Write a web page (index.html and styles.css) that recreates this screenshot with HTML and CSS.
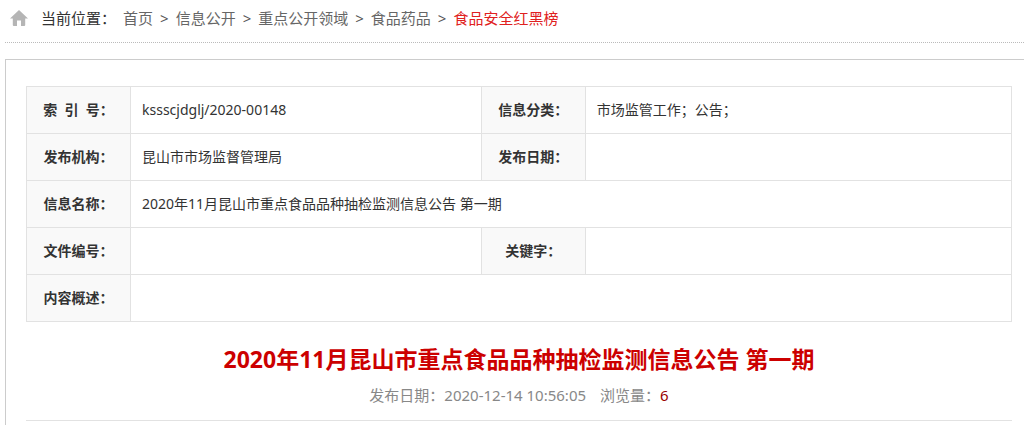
FILE: index.html
```html
<!DOCTYPE html>
<html lang="zh-CN">
<head>
    <meta charset="UTF-8">
    <meta name="viewport" content="width=device-width, initial-scale=1.0">
    <title>2020年11月昆山市重点食品品种抽检监测信息公告 第一期</title>
    <link rel="stylesheet" href="styles.css">
</head>
<body>
    <nav class="position">
        <svg class="home" viewBox="0 0 18 16" aria-hidden="true">
            <path d="M9 0 L18 8.4 H15.2 V15 Q15.2 16 14.2 16 H11 V10.5 H7 V16 H3.8 Q2.8 16 2.8 15 V8.4 H0 Z"/>
        </svg>
        <span class="position-label">当前位置：</span>
        <a href="#">首页</a>
        <span class="sep">&gt;</span>
        <a href="#">信息公开</a>
        <span class="sep">&gt;</span>
        <a href="#">重点公开领域</a>
        <span class="sep">&gt;</span>
        <a href="#">食品药品</a>
        <span class="sep">&gt;</span>
        <a href="#" class="current">食品安全红黑榜</a>
    </nav>

    <main class="panel">
        <table class="info">
            <colgroup>
                <col class="col-label">
                <col class="col-value">
                <col class="col-label">
                <col>
            </colgroup>
            <tr>
                <th scope="row">索&nbsp; 引&nbsp; 号：</th>
                <td>kssscjdglj/2020-00148</td>
                <th scope="row">信息分类：</th>
                <td>市场监管工作；公告；</td>
            </tr>
            <tr>
                <th scope="row">发布机构：</th>
                <td>昆山市市场监督管理局</td>
                <th scope="row">发布日期：</th>
                <td></td>
            </tr>
            <tr>
                <th scope="row">信息名称：</th>
                <td colspan="3">2020年11月昆山市重点食品品种抽检监测信息公告 第一期</td>
            </tr>
            <tr>
                <th scope="row">文件编号：</th>
                <td></td>
                <th scope="row">关键字：</th>
                <td></td>
            </tr>
            <tr>
                <th scope="row">内容概述：</th>
                <td colspan="3"></td>
            </tr>
        </table>

        <h1 class="title">2020年11月昆山市重点食品品种抽检监测信息公告 第一期</h1>
        <div class="meta">
            <span>发布日期：2020-12-14 10:56:05</span>
            <span>浏览量：<b class="count">6</b></span>
        </div>
    </main>
</body>
</html>
```

FILE: styles.css
```css
body {
    display: flex;
    flex-direction: column;
    min-height: 100vh;
    margin: 0;
    padding-left: 5px;
    box-sizing: border-box;
    background: #fff;
    color: #333;
    font-family: "Noto Sans", "Noto Sans CJK SC", sans-serif;
    font-size: 14px;
}
a {
    color: #666;
    text-decoration: none;
}
a:hover {
    text-decoration: underline;
}
.position {
    display: flex;
    align-items: center;
    gap: 7px;
    height: 36px;
    padding: 0 0 6px 5px;
    border-bottom: 1px dotted #bbb;
    font-size: 15px;
    line-height: 20px;
}
.home {
    width: 18px;
    height: 16px;
    margin-right: 6px;
    fill: #b5b5b5;
}
.sep {
    color: #555;
}
.position .current {
    color: #e02020;
}
.panel {
    flex: 1;
    margin-top: 16px;
    padding: 26px 12px 0 20px;
    border: 1px solid #ccc;
    border-width: 1px 0 0 1px;
}
.info {
    width: 100%;
    border-collapse: collapse;
    table-layout: fixed;
}
.col-label {
    width: 104px;
}
.col-value {
    width: 35.6%;
}
.info th,
.info td {
    height: 46px;
    padding: 0;
    border: 1px solid #e2e2e2;
    line-height: 20px;
}
.info th {
    background: #f9f9f9;
    text-align: center;
}
.info td {
    padding: 0 11px;
    text-align: left;
}
.title {
    margin: 21px 0 0;
    color: #c00;
    font-size: 23px;
    line-height: 32px;
    text-align: center;
}
.meta {
    display: flex;
    justify-content: center;
    gap: 14px;
    padding: 10px 0 15px;
    border-bottom: 1px solid #e2e2e2;
    color: #888;
    font-size: 15px;
    line-height: 20px;
}
.count {
    color: #900;
    font-weight: normal;
}
```
